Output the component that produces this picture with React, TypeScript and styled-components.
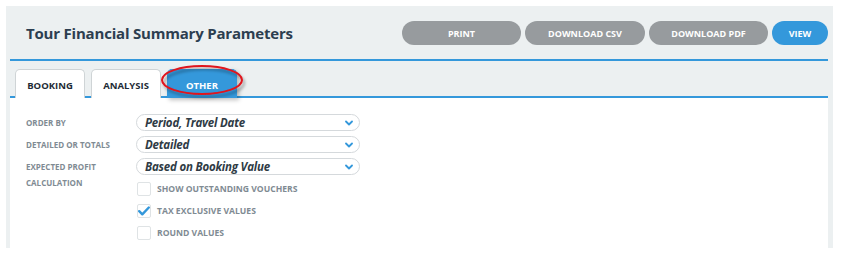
import React from "react";
import styled, { createGlobalStyle } from "styled-components";

const Global = createGlobalStyle`
  html, body { margin: 0; padding: 0; background: #ffffff; }
  body { font-family: "Open Sans", "Liberation Sans", sans-serif; }
`;

const BLUE = "#3498db";

const Frame = styled.div`
  margin: 6px 0 0 6px;
  width: 827px;
  height: 242px;
  box-sizing: border-box;
  background: #ecf0f1;
  padding: 0 5px 0 4px;
  display: flex;
  flex-direction: column;
`;

const Header = styled.div`
  height: 53px;
  display: flex;
  align-items: center;
  justify-content: space-between;
  padding-left: 16px;
  border-bottom: 2px solid ${BLUE};
`;

const Title = styled.h1`
  margin: 0;
  font-size: 15px;
  font-weight: 700;
  color: #2c3e50;
  letter-spacing: -0.2px;
`;

const Actions = styled.div`
  display: flex;
  gap: 4px;
  padding-top: 1px;
`;

const ActionButton = styled.button<{ $primary?: boolean; $w: number }>`
  width: ${(p) => p.$w}px;
  height: 24px;
  border: none;
  border-radius: 12px;
  background: ${(p) => (p.$primary ? BLUE : "#979b9e")};
  color: #ffffff;
  font-family: "Open Sans", "Liberation Sans", sans-serif;
  font-weight: 700;
  font-size: 9px;
  text-transform: uppercase;
  padding: 0;
`;

const TabBar = styled.div`
  position: relative;
  height: 37px;
  box-sizing: border-box;
  padding: 8px 0 0 5px;
  display: flex;
  gap: 6px;
  border-bottom: 2px solid ${BLUE};
`;

const Tab = styled.div<{ $active?: boolean }>`
  width: 70px;
  height: 29px;
  box-sizing: border-box;
  border: 1px solid ${(p) => (p.$active ? BLUE : "#cfd4d6")};
  border-bottom: none;
  border-radius: 5px 5px 0 0;
  background: ${(p) => (p.$active ? BLUE : "#ffffff")};
  color: ${(p) => (p.$active ? "#ffffff" : "#1e2b36")};
  box-shadow: ${(p) => (p.$active ? "2px 2px 4px rgba(0,0,0,0.25)" : "none")};
  font-weight: 700;
  font-size: 9.5px;
  display: flex;
  align-items: center;
  justify-content: center;
  padding-top: 2px;
`;

const Annotation = styled.svg`
  position: absolute;
  left: 147px;
  top: 2px;
  overflow: visible;
  pointer-events: none;
`;

const Content = styled.div`
  flex: 1;
  background: #ffffff;
  padding: 16px 0 0 16px;
  display: grid;
  grid-template-columns: 110px 224px;
  row-gap: 5px;
  align-content: start;
`;

const Label = styled.div`
  font-size: 8px;
  font-weight: 700;
  color: #7f8b93;
  text-transform: uppercase;
  line-height: 16px;
  padding-top: 1px;
`;

const Field = styled.div`
  display: flex;
  flex-direction: column;
`;

const Select = styled.div`
  height: 17px;
  box-sizing: border-box;
  border: 1px solid #d5d9dc;
  border-radius: 9px;
  display: flex;
  align-items: center;
  justify-content: space-between;
  padding: 0 6px 0 8px;
  font-size: 11.5px;
  font-style: italic;
  font-weight: 700;
  letter-spacing: -0.2px;
  color: #2f3b45;
`;

const Checks = styled.div`
  display: flex;
  flex-direction: column;
  gap: 8px;
  margin-top: 7px;
  padding-left: 1px;
`;

const CheckRow = styled.label`
  display: flex;
  align-items: center;
  gap: 6px;
  font-size: 8.6px;
  font-weight: 700;
  color: #7f8b93;
  text-transform: uppercase;
`;

const Box = styled.span`
  width: 14px;
  height: 14px;
  box-sizing: border-box;
  border: 1px solid #dfe3e5;
  border-radius: 2px;
  display: flex;
  align-items: center;
  justify-content: center;
`;

const Chevron = () => (
  <svg width="8" height="6" viewBox="0 0 8 6">
    <path d="M1 1.5 L4 4.5 L7 1.5" fill="none" stroke={BLUE} strokeWidth="1.8" strokeLinecap="round" strokeLinejoin="round" />
  </svg>
);

const Check = () => (
  <svg width="12" height="10" viewBox="0 0 12 10">
    <path d="M1.2 5.2 L4.3 8.3 L10.8 1.5" fill="none" stroke={BLUE} strokeWidth="2.4" strokeLinecap="round" strokeLinejoin="round" />
  </svg>
);

const SelectBox = ({ value }: { value: string }) => (
  <Select>
    <span>{value}</span>
    <Chevron />
  </Select>
);

export default function App() {
  return (
    <>
      <Global />
      <Frame>
        <Header>
          <Title>Tour Financial Summary Parameters</Title>
          <Actions>
            <ActionButton $w={119}>Print</ActionButton>
            <ActionButton $w={120}>Download CSV</ActionButton>
            <ActionButton $w={119}>Download PDF</ActionButton>
            <ActionButton $w={56} $primary>View</ActionButton>
          </Actions>
        </Header>
        <TabBar>
          <Tab>BOOKING</Tab>
          <Tab>ANALYSIS</Tab>
          <Tab $active>OTHER</Tab>
          <Annotation width="90" height="34" viewBox="0 0 90 34">
            <defs>
              <filter id="sh" x="-20%" y="-30%" width="140%" height="170%">
                <feDropShadow dx="2" dy="3" stdDeviation="1.5" floodColor="#000" floodOpacity="0.35" />
              </filter>
            </defs>
            <ellipse cx="45" cy="17" rx="40" ry="14" fill="none" stroke="#e0141e" strokeWidth="2" filter="url(#sh)" />
          </Annotation>
        </TabBar>
        <Content>
          <Label>Order By</Label>
          <Field>
            <SelectBox value="Period, Travel Date" />
          </Field>
          <Label>Detailed or Totals</Label>
          <Field>
            <SelectBox value="Detailed" />
          </Field>
          <Label>Expected Profit Calculation</Label>
          <Field>
            <SelectBox value="Based on Booking Value" />
            <Checks>
              <CheckRow>
                <Box />
                Show Outstanding Vouchers
              </CheckRow>
              <CheckRow>
                <Box>
                  <Check />
                </Box>
                Tax Exclusive Values
              </CheckRow>
              <CheckRow>
                <Box />
                Round Values
              </CheckRow>
            </Checks>
          </Field>
        </Content>
      </Frame>
    </>
  );
}
